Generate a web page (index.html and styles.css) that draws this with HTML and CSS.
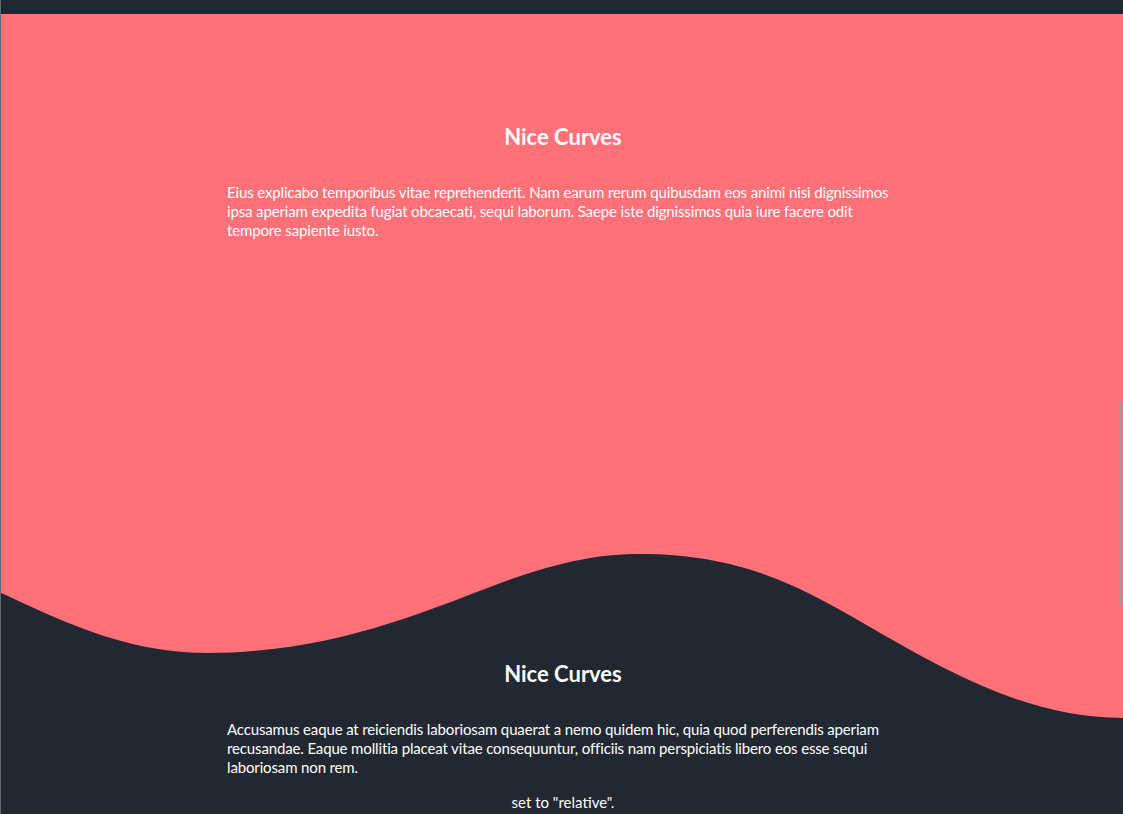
FILE: index.html
```html
<!DOCTYPE html>
<html lang="en">
<head>
<meta charset="utf-8">
<title>Nice Curves</title>
<link rel="stylesheet" href="styles.css">
</head>
<body>
<div class="topbar"></div>
<section class="section pink">
  <div class="content">
    <h2 class="title">Nice Curves</h2>
    <p class="text">Eius explicabo temporibus vitae reprehenderit. Nam earum rerum quibusdam eos animi nisi dignissimos ipsa aperiam expedita fugiat obcaecati, sequi laborum. Saepe iste dignissimos quia iure facere odit tempore sapiente iusto.</p>
  </div>
</section>
<section class="section dark">
  <svg class="wave" viewBox="0 0 1123 166" preserveAspectRatio="none" aria-hidden="true">
    <path d="M0,40 C50,62 120,100 205,100 C330,100 420,60 500,30 C560,8 600,1 640,1 C750,1 810,40 880,80 C950,120 1030,165 1123,165 L1123,0 L0,0 Z" fill="#ff7178"/>
  </svg>
  <div class="content">
    <h2 class="title">Nice Curves</h2>
    <p class="text">Accusamus eaque at reiciendis laboriosam quaerat a nemo quidem hic, quia quod perferendis aperiam recusandae. Eaque mollitia placeat vitae consequuntur, officiis nam perspiciatis libero eos esse sequi laboriosam non rem.</p>
    <p class="note">set to "relative".</p>
  </div>
</section>
<div class="scroll-thumb"></div>
</body>
</html>
```
FILE: styles.css
```css
html, body {
  margin: 0;
  padding: 0;
}
body {
  background: #222831;
  font-family: "Lato", "Noto Sans", sans-serif;
  color: #ffffff;
  border-left: 1px solid #5b6a78;
  height: 814px;
  overflow: hidden;
  position: relative;
}
.topbar {
  height: 14px;
  background: #222831;
}
.section {
  position: relative;
}
.pink {
  background: #ff7178;
  height: 539px;
}
.dark {
  background: #222831;
}
.wave {
  position: absolute;
  top: 0;
  left: 0;
  width: 100%;
  height: 166px;
  display: block;
}
.content {
  position: relative;
  width: 672px;
  margin: 0 auto;
  padding-left: 2px;
}
.pink .content {
  padding-top: 108px;
}
.dark .content {
  padding-top: 106px;
}
.title {
  margin: 0;
  text-align: center;
  font-size: 22px;
  font-weight: 700;
  line-height: 30px;
}
.text {
  margin: 31px 0 0;
  font-size: 15px;
  line-height: 19px;
  letter-spacing: -0.14px;
}
.dark .text {
  margin-top: 31px;
}
.note {
  margin: 16px 0 0;
  text-align: center;
  font-size: 15px;
  line-height: 19px;
}
.scroll-thumb {
  position: absolute;
  right: 1px;
  top: 402px;
  width: 2px;
  height: 203px;
  background: #9a9ea3;
}
```
